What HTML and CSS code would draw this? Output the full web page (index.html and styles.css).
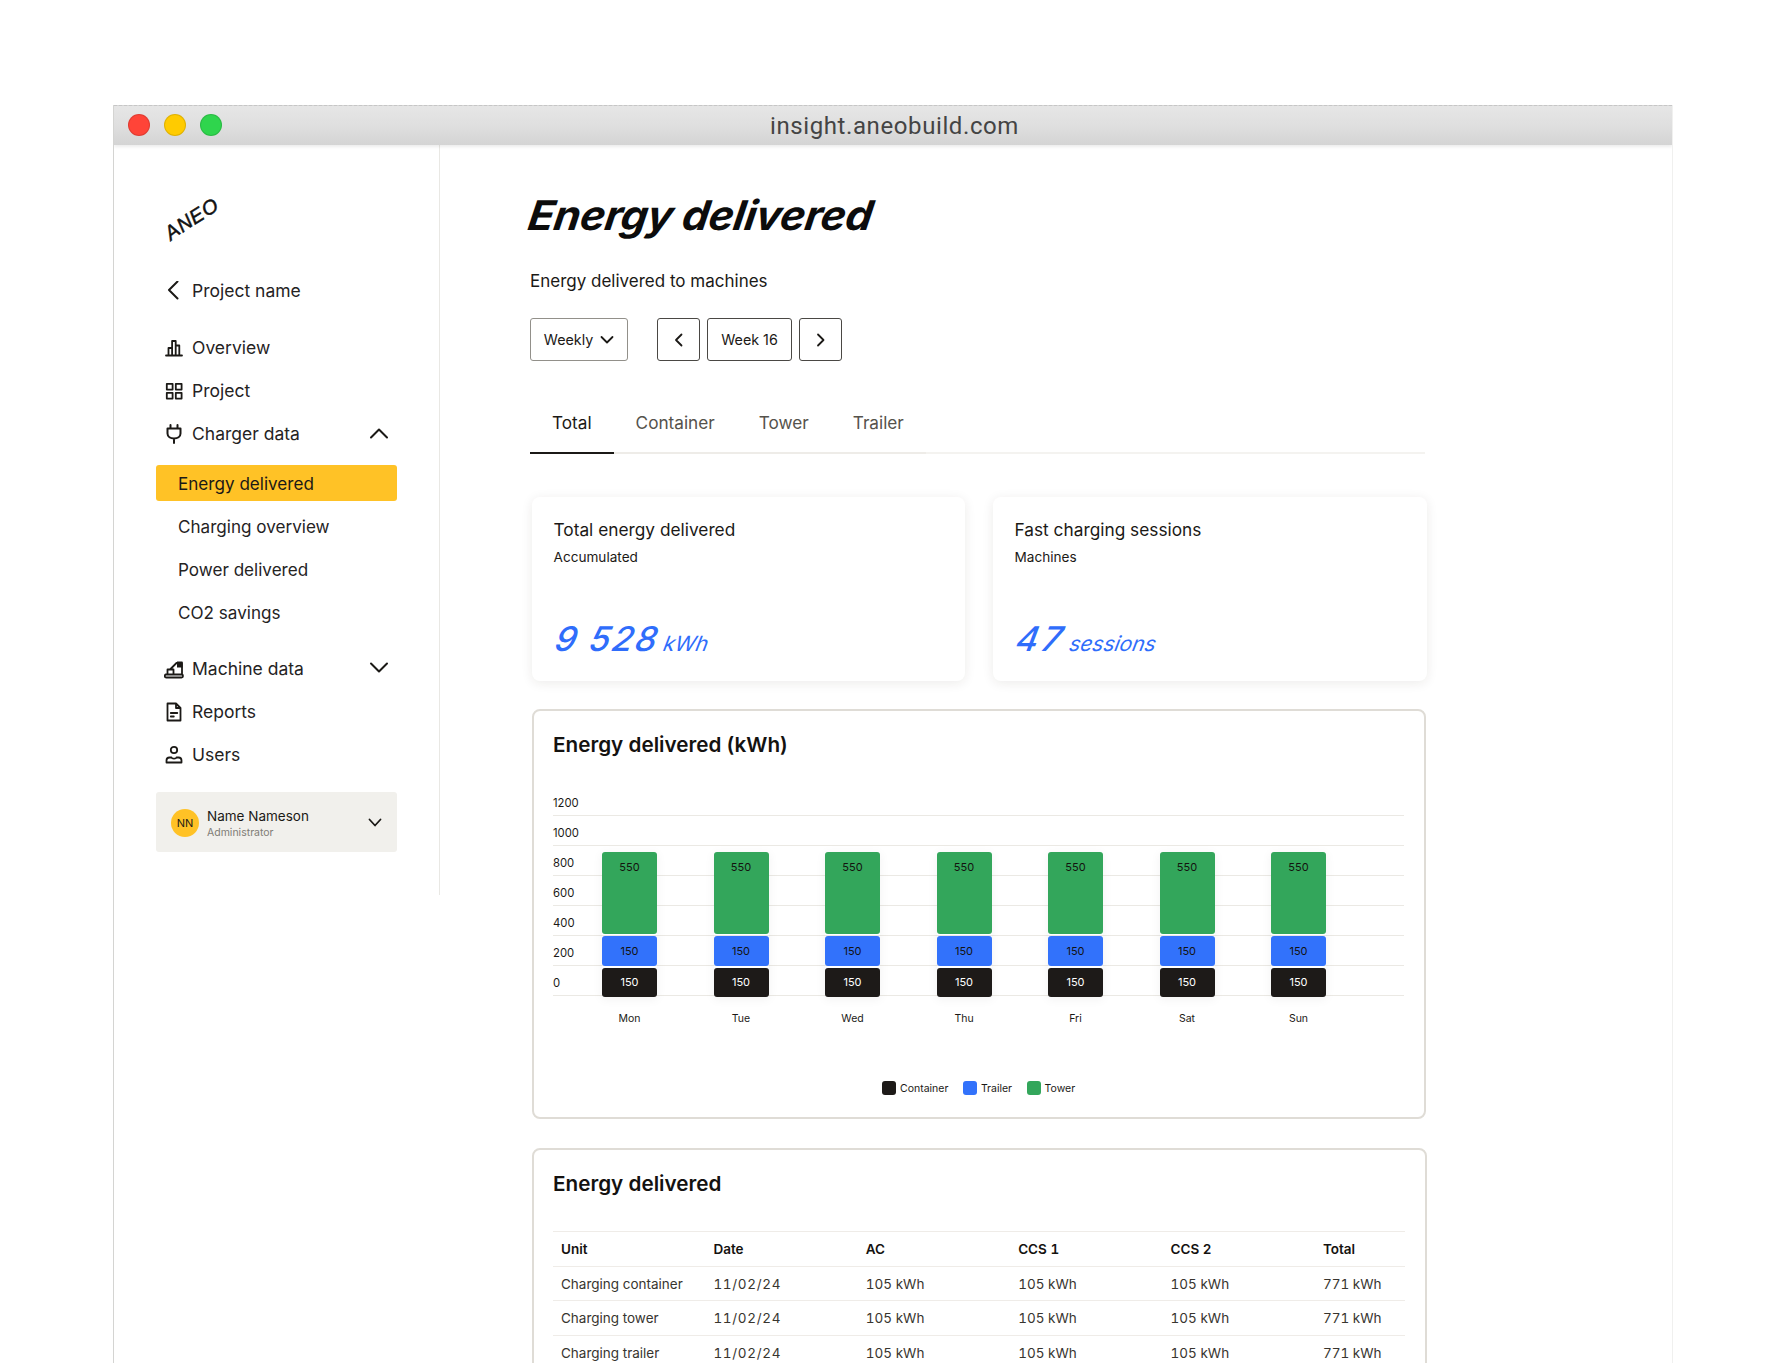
FILE: index.html
```html
<!DOCTYPE html>
<html lang="en">
<head>
<meta charset="utf-8">
<title>Energy delivered</title>
<link rel="stylesheet" href="styles.css">
</head>
<body>
<div class="window">
  <header class="titlebar">
    <div class="dots"><span class="dot red"></span><span class="dot yellow"></span><span class="dot green"></span></div>
    <div class="url">insight.aneobuild.com</div>
  </header>
  <div class="app">
    <aside class="sidebar">
      <svg class="logo" width="84" height="69" viewBox="0 0 84 69"><text class="logo-text" x="15 26.500 38.500 50" y="65 57 49 41" rotate="-38 -35 -32 -28">ANEO</text></svg>
      <a class="nav-row back"><svg class="ic" width="18" height="20" viewBox="0 0 18 20"><path class="st" d="M12.500 .5 4 9l8.500 8.500"/></svg><span>Project name</span></a>
      <nav class="nav-group">
        <a class="nav-row"><svg class="ic" width="18" height="18" viewBox="0 0 18 18"><path class="st thin" d="M1 16.500h16M3.500 16.500V9h3.600v7.500M7.100 16.500V2h3.600v14.500M10.700 16.500V6.500h3.600v10"/></svg><span>Overview</span></a>
        <a class="nav-row"><svg class="ic" width="18" height="18" viewBox="0 0 18 18"><path class="st thin" d="M1.800 1.800h5.800v5.800H1.800zM10.800 1.800h5.800v5.800h-5.800zM1.800 10.800h5.800v5.800H1.800zM10.800 10.800h5.800v5.800h-5.800z"/></svg><span>Project</span></a>
        <a class="nav-row"><svg class="ic" width="18" height="20" viewBox="0 0 18 20"><path class="st" d="M5.500 1v3.500M12.500 1v3.500M2.500 4.500h13v5c0 3.300-3 5-6.500 5s-6.500-1.700-6.500-5zM9 14.500V19"/></svg><span>Charger data</span><svg class="caret" width="20" height="12" viewBox="0 0 20 12"><path class="st" d="M2 10.500l8-8 8 8"/></svg></a>
      </nav>
      <nav class="sub-group">
        <a class="sub-row active">Energy delivered</a>
        <a class="sub-row">Charging overview</a>
        <a class="sub-row">Power delivered</a>
        <a class="sub-row">CO2 savings</a>
      </nav>
      <nav class="nav-group second">
        <a class="nav-row"><svg class="ic" width="20" height="20" viewBox="0 0 20 20"><path class="st thin" d="M2 15.500h15.500a1.500 1.500 0 0 1 0 3H2.500a1.500 1.500 0 0 1-.5-3zM3.500 15.500V10.500h6v5M6 10.500 12.500 4h5.500v11.500"/><path class="fl" d="M13 2.500h5.500v6H13z"/></svg><span>Machine data</span><svg class="caret" width="20" height="12" viewBox="0 0 20 12"><path class="st" d="M2 1.500l8 8 8-8"/></svg></a>
        <a class="nav-row"><svg class="ic" width="18" height="20" viewBox="0 0 18 20"><path class="st thin" d="M2.500 1.500h8.500l4.500 4.500v12.500h-13zM11 1.500V6h4.500M5.800 11h6.500M5.800 14.500h3"/></svg><span>Reports</span></a>
        <a class="nav-row"><svg class="ic" width="18" height="20" viewBox="0 0 18 20"><circle class="st thin" cx="9" cy="5" r="3.200"/><path class="st thin" d="M1.500 17.500v-2c0-2 1.500-3 3-3h2c.5 1.500 4.500 1.500 5 0h2c1.500 0 3 1 3 3v2z"/></svg><span>Users</span></a>
      </nav>
      <div class="user">
        <span class="avatar">NN</span>
        <div class="user-text"><div class="user-name">Name Nameson</div><div class="user-role">Administrator</div></div>
        <svg class="user-caret" width="14" height="10" viewBox="0 0 14 10"><path class="st thin" d="M1.500 1.500 7 7.500l5.500-6"/></svg>
      </div>
    </aside>
    <main class="main">
      <h1 class="title">Energy delivered</h1>
      <p class="subtitle">Energy delivered to machines</p>
      <div class="controls">
        <button class="btn select">Weekly<svg width="14" height="10" viewBox="0 0 14 10"><path class="st thin" d="M1.500 2 7 7.500 12.500 2"/></svg></button>
        <div class="pager">
          <button class="btn square"><svg width="10" height="14" viewBox="0 0 10 14"><path class="st thin" d="M7.500 1.500 2 7l5.500 5.500"/></svg></button>
          <button class="btn week">Week 16</button>
          <button class="btn square"><svg width="10" height="14" viewBox="0 0 10 14"><path class="st thin" d="M2 1.500 7.500 7 2 12.500"/></svg></button>
        </div>
      </div>
      <div class="tabs">
        <span class="tab current">Total</span>
        <span class="tab">Container</span>
        <span class="tab">Tower</span>
        <span class="tab">Trailer</span>
      </div>
      <section class="stats">
        <div class="stat">
          <div class="stat-title">Total energy delivered</div>
          <div class="stat-sub">Accumulated</div>
          <div class="stat-value"><span class="num">9 528</span> <span class="unit">kWh</span></div>
        </div>
        <div class="stat">
          <div class="stat-title">Fast charging sessions</div>
          <div class="stat-sub">Machines</div>
          <div class="stat-value"><span class="num wide">47</span> <span class="unit">sessions</span></div>
        </div>
      </section>
      <section class="panel chart">
        <h2 class="panel-title">Energy delivered (kWh)</h2>
        <div class="plot">
          <div class="grid-row">1200</div>
          <div class="grid-row">1000</div>
          <div class="grid-row">800</div>
          <div class="grid-row">600</div>
          <div class="grid-row">400</div>
          <div class="grid-row">200</div>
          <div class="grid-row">0</div>
          <div class="bars">
            <div class="bar"><span class="seg tower">550</span><span class="seg trailer">150</span><span class="seg container">150</span></div>
            <div class="bar"><span class="seg tower">550</span><span class="seg trailer">150</span><span class="seg container">150</span></div>
            <div class="bar"><span class="seg tower">550</span><span class="seg trailer">150</span><span class="seg container">150</span></div>
            <div class="bar"><span class="seg tower">550</span><span class="seg trailer">150</span><span class="seg container">150</span></div>
            <div class="bar"><span class="seg tower">550</span><span class="seg trailer">150</span><span class="seg container">150</span></div>
            <div class="bar"><span class="seg tower">550</span><span class="seg trailer">150</span><span class="seg container">150</span></div>
            <div class="bar"><span class="seg tower">550</span><span class="seg trailer">150</span><span class="seg container">150</span></div>
          </div>
        </div>
        <div class="days"><span>Mon</span><span>Tue</span><span>Wed</span><span>Thu</span><span>Fri</span><span>Sat</span><span>Sun</span></div>
        <div class="legend">
          <span class="key"><i class="swatch container"></i>Container</span>
          <span class="key"><i class="swatch trailer"></i>Trailer</span>
          <span class="key"><i class="swatch tower"></i>Tower</span>
        </div>
      </section>
      <section class="panel table-panel">
        <h2 class="panel-title">Energy delivered</h2>
        <table class="data">
          <thead><tr><th>Unit</th><th>Date</th><th>AC</th><th>CCS 1</th><th>CCS 2</th><th>Total</th></tr></thead>
          <tbody>
            <tr><td>Charging container</td><td>11/02/24</td><td>105 kWh</td><td>105 kWh</td><td>105 kWh</td><td>771 kWh</td></tr>
            <tr><td>Charging tower</td><td>11/02/24</td><td>105 kWh</td><td>105 kWh</td><td>105 kWh</td><td>771 kWh</td></tr>
            <tr><td>Charging trailer</td><td>11/02/24</td><td>105 kWh</td><td>105 kWh</td><td>105 kWh</td><td>771 kWh</td></tr>
          </tbody>
        </table>
      </section>
    </main>
  </div>
</div>
</body>
</html>
```
FILE: styles.css
```css
* { box-sizing: border-box; }
html, body { margin: 0; padding: 0; height: 1363px; overflow: hidden; background: #fff; }
body { font-family: Inter, "Liberation Sans", sans-serif; color: #1b1916; padding: 105px 0 0 113px; }
.window { width: 1560px; height: 1258px; border-left: 1px solid #d4d4d2; border-right: 1px solid #f0f0ef; overflow: hidden; }

.titlebar { height: 40px; position: relative; display: flex; align-items: center; justify-content: center;
  background: linear-gradient(#e6e6e6, #dfdfdf 50%, #d4d4d4); border-top: 1px dashed #c6c6c6; box-shadow: 0 2px 3px rgba(0,0,0,.08); }
.dots { position: absolute; left: 14px; top: 8px; display: flex; gap: 14px; }
.dot { width: 22px; height: 22px; border-radius: 50%; border: 1px solid rgba(0,0,0,.12); }
.red { background: #ff4438; }
.yellow { background: #ffcb00; }
.green { background: #2fd54d; }
.url { font-family: Roboto, sans-serif; font-size: 24px; color: #444; letter-spacing: .6px; padding-left: 3px; }

.app { display: flex; align-items: flex-start; }
.sidebar { width: 326px; height: 750px; flex: none; border-right: 1px solid #e9e8e4; padding: 31px 42px 0 42px; }
.logo { display: block; margin-bottom: 24px; }
.logo-text { font-family: "Liberation Sans", sans-serif; font-style: italic; font-weight: 400; font-size: 20px; fill: #111; stroke: #111; stroke-width: .5; }
.st { fill: none; stroke: #1b1916; stroke-width: 2; stroke-linecap: round; stroke-linejoin: round; }
.st.thin { stroke-width: 1.8; }
.fl { fill: #1b1916; }
.nav-row { display: flex; align-items: center; height: 43px; padding-left: 8px; font-size: 17.500px; color: #25231f; }
.nav-row .ic { flex: none; margin-right: 8px; width: 20px; }
.nav-group { margin-top: 14px; }
.nav-group.second { margin-top: 17px; }
.caret { margin: 0 8px 2px auto; }
.sub-group { margin-top: 10px; display: flex; flex-direction: column; gap: 7px; }
.sub-row { height: 36px; display: flex; align-items: center; padding-left: 22px; font-size: 17.100px; border-radius: 3px; color: #25231f; }
.sub-row.active { background: #ffc226; color: #1b1916; }
.user { margin-top: 16px; height: 60px; background: #f1f0ec; border-radius: 3px; display: flex; align-items: center; padding: 2px 15px 0; }
.avatar { width: 28px; height: 28px; border-radius: 50%; background: #ffc226; display: flex; align-items: center; justify-content: center; font-size: 11px; flex: none; }
.user-text { margin-left: 8px; }
.user-name { font-size: 13.500px; line-height: 18px; }
.user-role { margin-top: 1px; font-size: 10.500px; line-height: 14px; color: #807d76; }
.user-caret { margin-left: auto; }

.main { width: 987px; padding: 45px 0 0 90px; }
.title { margin: 0 0 0 -5px; font-size: 41px; line-height: 50px; font-weight: 700; font-style: italic; color: #0c0c0c; letter-spacing: -.4px; transform: skewX(-9deg) scaleX(1.04); transform-origin: left bottom; white-space: nowrap; }
.subtitle { margin: 29px 0 0; font-size: 17px; line-height: 24px; }
.controls { margin-top: 25px; display: flex; gap: 29px; }
.pager { display: flex; gap: 7px; }
.btn { height: 43px; background: #fff; border: 1.500px solid #4a4844; border-radius: 3px; font-family: inherit; font-size: 14.300px; color: #1b1916; display: flex; align-items: center; justify-content: center; padding: 0; }
.select { width: 98px; border-color: #92908a; gap: 7px; }
.square { width: 43px; }
.week { width: 85px; }
.tabs { margin-top: 33px; width: 895px; display: flex; background: linear-gradient(#f4f3f0, #f4f3f0) no-repeat bottom / 100% 2px; }
.tab { height: 60px; padding: 0 22px 1px; display: flex; align-items: center; font-size: 17.200px; color: #55524c; border-bottom: 2px solid #eeece8; }
.tab.current { color: #1b1916; border-bottom-color: #1b1916; }

.stats { margin: 43px 0 0 2px; display: grid; grid-template-columns: 433px 434px; gap: 28px; }
.stat { height: 184px; border-radius: 8px; background: #fff; box-shadow: 0 2px 12px rgba(40,30,20,.09); padding: 22px 21.500px 0; }
.stat-title { font-size: 17.300px; line-height: 22px; }
.stat-sub { margin-top: 7px; font-size: 13.600px; line-height: 18px; }
.stat-value { margin: 51px 0 0 -3px; color: #2f6dfb; line-height: 44px; white-space: nowrap; display: flex; align-items: baseline; gap: 5px; }
.num, .unit { display: inline-block; font-style: italic; transform: skewX(-12deg); transform-origin: left bottom; }
.num { font-size: 34px; letter-spacing: 2px; font-weight: 500; }
.num.wide { letter-spacing: 3.500px; }
.unit { font-size: 21px; }

.panel { margin: 28px 0 0 2px; width: 894px; border: 2px solid #dfdcd6; border-radius: 8px; padding: 20px 20px 19px 19px; background: #fff; }
.panel-title { margin: 0; font-size: 20.700px; line-height: 28px; font-weight: 600; color: #141210; }
.plot { position: relative; margin-top: 27px; }
.grid-row { height: 30px; border-bottom: 1px solid #ebe9e4; padding-top: 5px; display: flex; align-items: center; font-size: 11.300px; color: #1b1916; }
.bars, .days { display: flex; gap: 56.500px; padding-left: 49px; }
.bars { position: absolute; left: 0; bottom: -1px; }
.bar { width: 55px; display: flex; flex-direction: column; gap: 2px; box-shadow: 0 2px 10px rgba(40,30,20,.06); }
.seg { border-radius: 3px; display: flex; justify-content: center; font-size: 11px; }
.seg.tower { height: 82px; padding-top: 8px; background: #33a65b; color: #14130f; }
.seg.trailer { height: 30px; align-items: center; background: #3272fb; color: #14130f; }
.seg.container { height: 29px; align-items: center; padding-bottom: 1px; background: #1d1a18; color: #fff; }
.days { margin-top: 13px; }
.days span { width: 55px; text-align: center; font-size: 10.500px; line-height: 20px; }
.legend { margin-top: 49px; display: flex; padding-left: 329px; gap: 14.500px; height: 20px; align-items: center; font-size: 10.500px; }
.key { display: flex; align-items: center; gap: 4px; }
.swatch { width: 14px; height: 14px; border-radius: 3px; }
.swatch.container { background: #1d1a18; }
.swatch.trailer { background: #3272fb; }
.swatch.tower { background: #33a65b; }

.table-panel { margin-top: 29px; width: 895px; }
.data { margin-top: 33px; width: 852px; table-layout: fixed; border-collapse: collapse; font-size: 13.500px; font-variant-numeric: tabular-nums; }
.data th, .data td { height: 34.700px; padding: 0 0 0 8px; text-align: left; border-top: 1.500px solid #efece8; }
.data th { font-weight: 600; color: #141210; width: 152.400px; }
.data th:last-child { width: 90px; }
.data td { color: #38352f; }
.data td:nth-child(2) { letter-spacing: .7px; }
```
